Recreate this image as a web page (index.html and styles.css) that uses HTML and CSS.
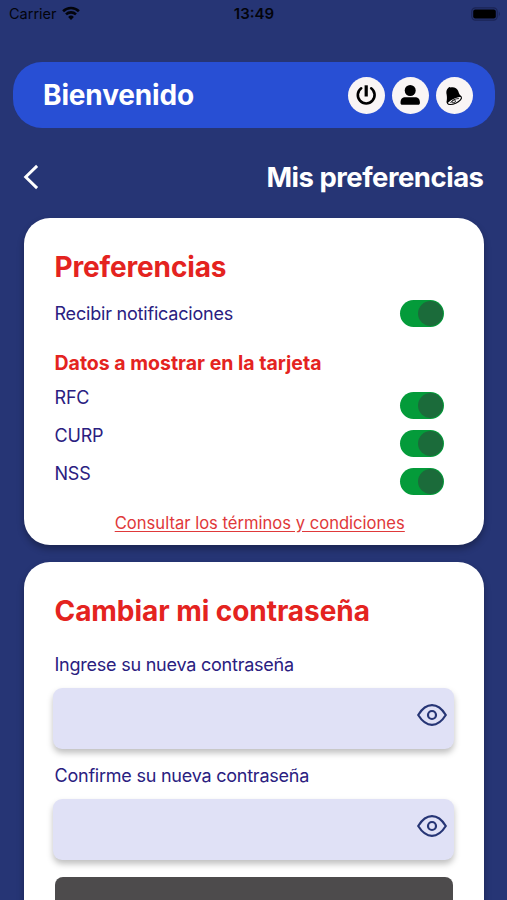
FILE: index.html
```html
<!DOCTYPE html>
<html lang="es">
<head>
<meta charset="utf-8">
<title>Mis preferencias</title>
<link rel="stylesheet" href="styles.css">
</head>
<body>
<div class="screen">
  <div class="status">
    <div class="carrier"><span>Carrier</span>
      <svg width="18" height="14" viewBox="0 0 18 14" fill="none" stroke="#03040b" stroke-width="2.6"><path d="M1.1 5.2a11.4 11.4 0 0 1 15.8 0"/><path d="M4 8.4a7.3 7.3 0 0 1 10 0"/><path d="M9 13.9L6.1 11a4.2 4.2 0 0 1 5.8 0z" fill="#03040b" stroke="none"/></svg>
    </div>
    <span class="time">13:49</span>
    <svg class="battery" width="30" height="14" viewBox="0 0 30 14"><rect x=".8" y=".8" width="25.4" height="12.4" rx="3.6" fill="none" stroke="#1b2455" stroke-width="1.2"/><rect x="2.2" y="2.4" width="22.6" height="9.2" rx="2" fill="#000"/><path d="M27.8 4.6q2 2.4 0 4.8z" fill="#1b2455"/></svg>
  </div>
  <header class="welcome">
    <h1>Bienvenido</h1>
    <div class="actions">
      <button class="round" aria-label="Salir"><svg width="37" height="37" viewBox="0 0 37 37" fill="none" stroke="#000" stroke-linecap="round"><path stroke-width="2.6" d="M13.2 11.3a8.4 8.4 0 1 0 10 0"/><path stroke-width="3.2" stroke-linecap="butt" d="M18.2 8.300v11.200"/></svg></button>
      <button class="round" aria-label="Perfil"><svg width="37" height="37" viewBox="0 0 37 37"><circle cx="18.2" cy="13.5" r="5.5"/><path d="M8.5 25.800c0-3.8 1.8-5.500 5-5.500h9.400c3.200 0 5 1.700 5 5.500 0 1.400-.6 2-1.800 2H10.300c-1.200 0-1.800-.6-1.800-2z"/></svg></button>
      <button class="round" aria-label="Notificaciones"><svg width="37" height="37" viewBox="0 0 37 37"><ellipse cx="18.400" cy="23.200" rx="7.600" ry="3.300" transform="rotate(-24 18.400 23.200)" fill="#f7f4f5" stroke="#000" stroke-width="1.100"/><path d="M12.400 10.700l1-.7 1.300.5c3-.9 6.400.6 7.500 3.500.9 2.300 1.300 4.200 3.600 5.600-4.800.4-10 2.700-13.900 6.100l-1.500-.3c.6-2.300.7-4.600.3-7.300-.7-3.200-.5-5.700 1.700-7.400z"/><path d="M14.500 26c1.500-2.600 4.600-4.400 8.400-4.500" fill="none" stroke="#000" stroke-width=".8"/><ellipse cx="17.700" cy="24.500" rx="1.900" ry="1.200" transform="rotate(-24 17.700 24.500)" fill="#f7f4f5" stroke="#000" stroke-width=".8"/></svg></button>
    </div>
  </header>
  <nav class="titlebar">
    <svg width="16" height="26" viewBox="0 0 16 26" fill="none" stroke="#fff" stroke-width="2.900"><path d="M14.100 1.900L2.700 13l11.400 11.100"/></svg>
    <h2 class="page-title">Mis preferencias</h2>
  </nav>
  <main>
    <section class="card prefs">
      <h3 class="prefs-title">Preferencias</h3>
      <div class="row notify"><span>Recibir notificaciones</span><i class="toggle"></i></div>
      <h4>Datos a mostrar en la tarjeta</h4>
      <div class="row data"><span>RFC</span><i class="toggle"></i></div>
      <div class="row data"><span>CURP</span><i class="toggle"></i></div>
      <div class="row data"><span>NSS</span><i class="toggle"></i></div>
      <a class="terms">Consultar los términos y condiciones</a>
    </section>
    <section class="card password">
      <h3 class="password-title">Cambiar mi contraseña</h3>
      <label class="new">Ingrese su nueva contraseña</label>
      <div class="field"><svg width="30" height="22" viewBox="0 0 30 22" fill="none" stroke="#263575" stroke-width="2.200"><path d="M1.200 11C5.200 4.600 9.600 1.200 15 1.200S24.800 4.600 28.800 11C24.800 17.400 20.400 20.800 15 20.800S5.200 17.400 1.200 11z" stroke-linejoin="round"/><circle cx="15" cy="11" r="4"/></svg></div>
      <label class="confirm">Confirme su nueva contraseña</label>
      <div class="field"><svg width="30" height="22" viewBox="0 0 30 22" fill="none" stroke="#263575" stroke-width="2.200"><path d="M1.200 11C5.200 4.600 9.600 1.200 15 1.200S24.800 4.600 28.800 11C24.800 17.400 20.400 20.800 15 20.800S5.200 17.400 1.200 11z" stroke-linejoin="round"/><circle cx="15" cy="11" r="4"/></svg></div>
      <div class="submit"></div>
    </section>
  </main>
</div>
</body>
</html>
```
FILE: styles.css
```css
* { box-sizing: border-box; }
body { margin: 0; font-family: Inter, "Liberation Sans", sans-serif; background: #263575; }
h1, h2, h3, h4 { margin: 0; white-space: nowrap; }
svg { display: block; flex: none; }
.screen { width: 507px; height: 900px; overflow: hidden; background: #263575; }
.status { height: 27px; display: grid; grid-template-columns: 1fr auto 1fr; align-items: center; padding: 0 6px 0 9px; color: #03040b; font-size: 14.500px; }
.carrier { display: flex; align-items: center; gap: 5px; }
.carrier svg { margin-top: -2px; }
.time { font-weight: 600; font-size: 15px; margin-right: 2px; }
.battery { justify-self: end; }
.welcome { margin: 35px 12px 0 13px; height: 66px; padding: 0 22px 0 30px; border-radius: 29px; background: #284fd4; display: flex; align-items: center; justify-content: space-between; color: #fff; }
.welcome h1 { font-size: 28px; font-weight: 700; line-height: 34px; letter-spacing: -.15px; }
.actions { display: flex; gap: 7px; }
.round { width: 37px; height: 37px; border: 0; padding: 0; border-radius: 50%; background: #f9f5f5; }
.titlebar { height: 90px; padding: 8px 23.500px 0 23px; display: flex; align-items: center; justify-content: space-between; color: #fff; }
.page-title { font-size: 27.500px; font-weight: 700; letter-spacing: -.5px; }
main { padding: 0 23px 0 24px; display: flex; flex-direction: column; gap: 17px; }
.card { background: #fff; border-radius: 26px; padding: 0 30px 0 30.500px; box-shadow: 0 4px 7px rgba(0, 0, 0, .3); color: #2a2080; font-size: 18px; }
.prefs { height: 327px; padding-top: 31px; display: flex; flex-direction: column; }
h3 { color: #e42320; font-size: 28px; font-weight: 700; line-height: 36px; letter-spacing: -.15px; }
.password-title { letter-spacing: -.05px; }
h4 { color: #e42320; font-size: 19.500px; font-weight: 700; line-height: 24px; margin: 24px 0 10px; }
.row { display: flex; justify-content: space-between; padding-right: 10px; letter-spacing: -.2px; }
.row span { line-height: 27px; }
.notify { margin-top: 15px; height: 27px; }
.data { height: 38px; }
.data span { margin-top: -1px; }
.data .toggle { margin-top: 7px; }
.toggle { width: 44px; height: 27px; padding: 1px; border-radius: 14px; background: #049b3a; display: flex; justify-content: flex-end; }
.toggle::before { content: ""; width: 25px; height: 25px; border-radius: 50%; background: #1b6b3a; }
.terms { align-self: center; margin: 13px 0 0 11px; font-size: 16.600px; line-height: 22px; color: #e0393a; text-decoration: underline; text-underline-offset: 2px; white-space: nowrap; }
.password { height: 400px; padding-top: 31px; }
.password label { display: block; line-height: 24px; white-space: nowrap; letter-spacing: -.23px; }
.password .new { margin: 24px 0 11px; }
.password .confirm { margin: 15px 0 11px; }
.field { height: 61px; margin: 0 0 0 -1.500px; padding: 16px 7px 0 0; display: flex; justify-content: flex-end; border-radius: 9px; background: #e0e1f6; box-shadow: 0 4px 6px rgba(0, 0, 0, .25); }
.submit { height: 60px; margin: 17px 1px 0 0; border-radius: 8px; background: #4d4b4c; }
```
